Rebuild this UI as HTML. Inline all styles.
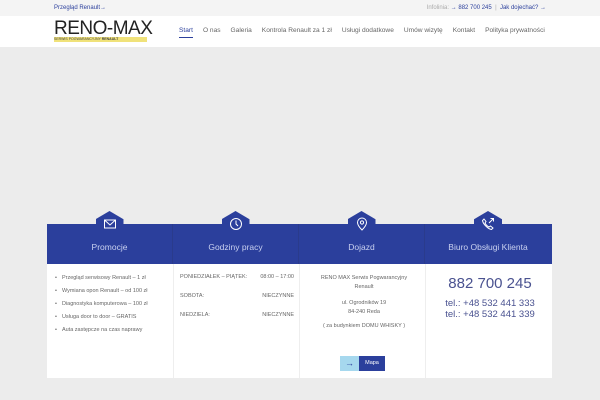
<!DOCTYPE html>
<html><head><meta charset="utf-8"><style>
*{margin:0;padding:0;box-sizing:border-box}
body{width:600px;height:400px;background:#ececec;font-family:"Liberation Sans",sans-serif;position:relative;overflow:hidden;color:#555}
.top{position:absolute;left:0;top:0;width:600px;height:16px;background:#f4f4f4;font-size:6px}
.top .l{position:absolute;left:54px;top:5px;color:#2b3f9c}
.top .r{position:absolute;right:54px;top:5px;color:#aaa}
.top .r b{font-weight:normal;color:#2b3f9c}
.hdr{position:absolute;left:0;top:16px;width:600px;height:31px;background:#fff}
.logo{position:absolute;left:54px;top:5px;font-size:19px;letter-spacing:-0.5px;color:#222;line-height:16px}
.logo small{display:block;font-size:3.5px;letter-spacing:0;background:#f0e27a;color:#444;line-height:5px;width:93px}
.nav{position:absolute;left:179px;top:11px;font-size:6.6px;color:#666;white-space:nowrap}
.nav span{margin-right:10px}
.nav .a{color:#2b3f9c;border-bottom:1px solid #2b3f9c;padding-bottom:3px}
.band{position:absolute;left:47px;top:224px;width:505px;height:40px;background:#2b3f9c}
.col{position:absolute;top:224px;width:126px;height:40px;text-align:center;color:#c9d1f0;font-size:8.5px;border-right:1px solid #2a3b8c}
.col .t{position:absolute;top:18px;width:100%}
.hex{position:absolute;top:-13px;left:50%;margin-left:-14px;width:28px;height:15px;background:#2b3f9c;clip-path:polygon(0 100%,0 55%,50% 0,100% 55%,100% 100%)}
.ic{position:absolute;top:-7px;left:50%;margin-left:-7px}
.card{position:absolute;left:47px;top:264px;width:505px;height:114px;background:#fff}
.sep{position:absolute;top:264px;width:1px;height:114px;background:#eee}
.list{position:absolute;left:55px;top:272px;font-size:5.5px;color:#666;line-height:13px}
.list div:before{content:"•";margin-right:5px}
.hrs{position:absolute;left:180px;top:274px;width:114px;font-size:5.5px;color:#666}
.hrs div{display:flex;justify-content:space-between;height:19px}
.addr{position:absolute;left:305px;top:274px;width:118px;text-align:center;font-size:5.5px;line-height:8.5px;color:#666}
.phone{position:absolute;left:428px;top:275px;width:124px;text-align:center;color:#4a5290}
.btn{position:absolute;left:340px;top:356px;height:15px;font-size:5.5px}
</style></head><body>
<div class="top"><span class="l">Przegląd Renault→</span><span class="r">Infolinia: <b>→ 882 700 245</b> &nbsp;| &nbsp;<b>Jak dojechać? →</b></span></div>
<div class="hdr">
<div class="logo">RENO-MAX<small>SERWIS POGWARANCYJNY <b>RENAULT</b></small></div>
<div class="nav"><span class="a">Start</span><span>O nas</span><span>Galeria</span><span>Kontrola Renault za 1 zł</span><span>Usługi dodatkowe</span><span>Umów wizytę</span><span>Kontakt</span><span style="margin:0">Polityka prywatności</span></div>
</div>
<div class="band"></div>
<div class="col" style="left:47px"><div class="hex"></div><svg class="ic" width="14" height="14" viewBox="0 0 14 14" fill="none" stroke="#fff" stroke-width="1"><rect x="1.5" y="3" width="11" height="8"/><path d="M1.5 3l5.5 5 5.5-5"/></svg><div class="t">Promocje</div></div>
<div class="col" style="left:173px"><div class="hex"></div><svg class="ic" width="14" height="14" viewBox="0 0 14 14" fill="none" stroke="#fff" stroke-width="1"><circle cx="7" cy="7" r="5.5"/><path d="M7 3.5V7l2 2"/></svg><div class="t">Godziny pracy</div></div>
<div class="col" style="left:299px"><div class="hex"></div><svg class="ic" width="14" height="14" viewBox="0 0 14 14" fill="none" stroke="#fff" stroke-width="1"><path d="M7 13s-4.5-4.5-4.5-7.5a4.5 4.5 0 0 1 9 0C11.5 8.5 7 13 7 13z"/><circle cx="7" cy="5.5" r="1.6"/></svg><div class="t">Dojazd</div></div>
<div class="col" style="left:425px;border:0"><div class="hex"></div><svg class="ic" width="14" height="14" viewBox="0 0 14 14" fill="none" stroke="#fff" stroke-width="1"><path d="M3 2l2 2.5-1 1.5c1 2 2 3 4 4l1.5-1 2.5 2-1.5 1.5C7 12 2 7 1.5 3.5z"/><path d="M8 6l4.5-4.5M9.5 1.5h3v3"/></svg><div class="t">Biuro Obsługi Klienta</div></div>
<div class="card"></div>
<div class="sep" style="left:173px"></div><div class="sep" style="left:299px"></div><div class="sep" style="left:425px"></div>
<div class="list"><div>Przegląd serwisowy Renault – 1 zł</div><div>Wymiana opon Renault – od 100 zł</div><div>Diagnostyka komputerowa – 100 zł</div><div>Usługa door to door – GRATIS</div><div>Auta zastępcze na czas naprawy</div></div>
<div class="hrs"><div><span>PONIEDZIAŁEK – PIĄTEK:</span><span>08:00 – 17:00</span></div><div><span>SOBOTA:</span><span>NIECZYNNE</span></div><div><span>NIEDZIELA:</span><span>NIECZYNNE</span></div></div>
<div class="addr">RENO MAX Serwis Pogwarancyjny<br>Renault<br><div style="height:8px"></div>ul. Ogrodników 19<br>84-240 Reda<br><div style="height:6px"></div>( za budynkiem DOMU WHISKY )</div>
<div class="phone"><div style="font-size:15px">882 700 245</div><div style="font-size:9.5px;margin-top:6px;line-height:11px">tel.: +48 532 441 333<br>tel.: +48 532 441 339</div></div>
<div class="btn"><span style="display:inline-block;width:19px;height:15px;background:#a6d8ee;color:#2b3f9c;text-align:center;line-height:15px;font-size:9px;vertical-align:top">→</span><span style="display:inline-block;width:26px;height:15px;background:#2b3f9c;color:#fff;text-align:center;line-height:15px;vertical-align:top">Mapa</span></div>
</body></html>
